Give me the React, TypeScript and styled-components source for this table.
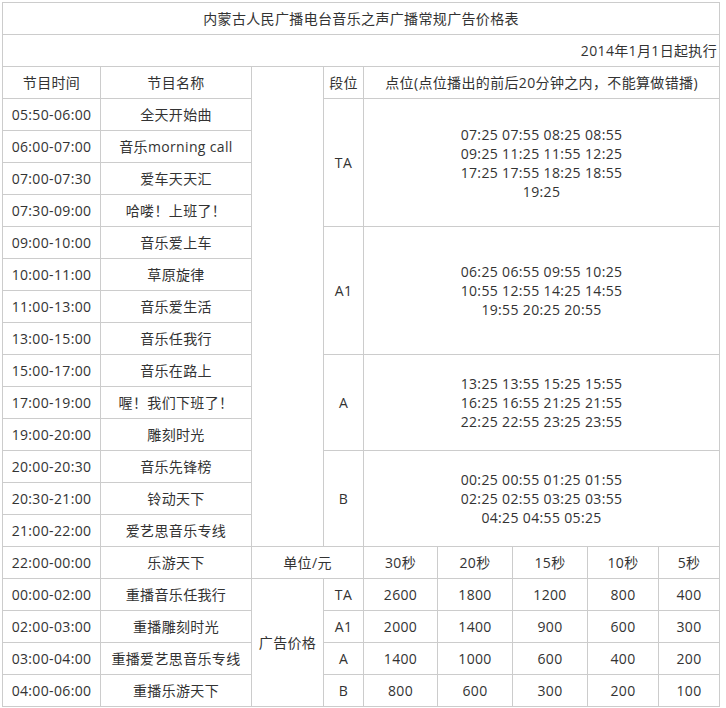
import React from "react";
import styled, { createGlobalStyle } from "styled-components";

const GlobalStyle = createGlobalStyle`
  html, body {
    margin: 0;
    padding: 0;
    background: #fff;
  }
  body {
    padding: 2px;
    font-family: "Open Sans", "Noto Sans CJK SC", sans-serif;
    color: #333;
  }
`;

const Table = styled.table`
  border-collapse: collapse;
  table-layout: fixed;
  width: 718px;
  font-size: 14px;
  color: #333;
  letter-spacing: 0.35px;
  text-spacing-trim: space-all;
`;

const Row = styled.tr`
  height: 32px;
`;

const Cell = styled.td<{ align?: "left" | "center" | "right" }>`
  border: 1px solid #cccccc;
  padding: 0 2px;
  text-align: ${props => props.align || "center"};
  vertical-align: middle;
  white-space: nowrap;
  line-height: 19px;
`;

const Slots = styled.div`
  line-height: 19px;
`;

const colWidths = [98, 151, 72, 40, 74, 75, 75, 71, 61];

type Program = [string, string];

const programs: Program[] = [
  ["05:50-06:00", "全天开始曲"],
  ["06:00-07:00", "音乐morning call"],
  ["07:00-07:30", "爱车天天汇"],
  ["07:30-09:00", "哈喽！上班了！"],
  ["09:00-10:00", "音乐爱上车"],
  ["10:00-11:00", "草原旋律"],
  ["11:00-13:00", "音乐爱生活"],
  ["13:00-15:00", "音乐任我行"],
  ["15:00-17:00", "音乐在路上"],
  ["17:00-19:00", "喔！我们下班了！"],
  ["19:00-20:00", "雕刻时光"],
  ["20:00-20:30", "音乐先锋榜"],
  ["20:30-21:00", "铃动天下"],
  ["21:00-22:00", "爱艺思音乐专线"],
];

// 段位 blocks: start row index, row count, slot lines
const segments: { start: number; span: number; name: string; lines: string[] }[] = [
  {
    start: 0,
    span: 4,
    name: "TA",
    lines: ["07:25 07:55 08:25 08:55", "09:25 11:25 11:55 12:25", "17:25 17:55 18:25 18:55", "19:25"],
  },
  {
    start: 4,
    span: 4,
    name: "A1",
    lines: ["06:25 06:55 09:55 10:25", "10:55 12:55 14:25 14:55", "19:55 20:25 20:55"],
  },
  {
    start: 8,
    span: 3,
    name: "A",
    lines: ["13:25 13:55 15:25 15:55", "16:25 16:55 21:25 21:55", "22:25 22:55 23:25 23:55"],
  },
  {
    start: 11,
    span: 3,
    name: "B",
    lines: ["00:25 00:55 01:25 01:55", "02:25 02:55 03:25 03:55", "04:25 04:55 05:25"],
  },
];

const durations = ["30秒", "20秒", "15秒", "10秒", "5秒"];

const replays: { time: string; name: string; level: string; prices: number[] }[] = [
  { time: "00:00-02:00", name: "重播音乐任我行", level: "TA", prices: [2600, 1800, 1200, 800, 400] },
  { time: "02:00-03:00", name: "重播雕刻时光", level: "A1", prices: [2000, 1400, 900, 600, 300] },
  { time: "03:00-04:00", name: "重播爱艺思音乐专线", level: "A", prices: [1400, 1000, 600, 400, 200] },
  { time: "04:00-06:00", name: "重播乐游天下", level: "B", prices: [800, 600, 300, 200, 100] },
];

export default function App() {
  return (
    <>
      <GlobalStyle />
      <Table>
        <colgroup>
          {colWidths.map((w, i) => (
            <col key={i} style={{ width: w }} />
          ))}
        </colgroup>
        <tbody>
          <Row>
            <Cell colSpan={9}>内蒙古人民广播电台音乐之声广播常规广告价格表</Cell>
          </Row>
          <Row>
            <Cell colSpan={9} align="right">
              2014年1月1日起执行
            </Cell>
          </Row>
          <Row>
            <Cell>节目时间</Cell>
            <Cell>节目名称</Cell>
            <Cell rowSpan={15} />
            <Cell>段位</Cell>
            <Cell colSpan={5}>点位(点位播出的前后20分钟之内，不能算做错播)</Cell>
          </Row>
          {programs.map(([time, name], i) => {
            const seg = segments.find(s => s.start === i);
            return (
              <Row key={time}>
                <Cell>{time}</Cell>
                <Cell>{name}</Cell>
                {seg && <Cell rowSpan={seg.span}>{seg.name}</Cell>}
                {seg && (
                  <Cell rowSpan={seg.span} colSpan={5}>
                    <Slots>
                      {seg.lines.map(line => (
                        <div key={line}>{line}</div>
                      ))}
                    </Slots>
                  </Cell>
                )}
              </Row>
            );
          })}
          <Row>
            <Cell>22:00-00:00</Cell>
            <Cell>乐游天下</Cell>
            <Cell colSpan={2}>单位/元</Cell>
            {durations.map(d => (
              <Cell key={d}>{d}</Cell>
            ))}
          </Row>
          {replays.map((r, i) => (
            <Row key={r.time}>
              <Cell>{r.time}</Cell>
              <Cell>{r.name}</Cell>
              {i === 0 && <Cell rowSpan={replays.length}>广告价格</Cell>}
              <Cell>{r.level}</Cell>
              {r.prices.map((p, j) => (
                <Cell key={j}>{p}</Cell>
              ))}
            </Row>
          ))}
        </tbody>
      </Table>
    </>
  );
}
